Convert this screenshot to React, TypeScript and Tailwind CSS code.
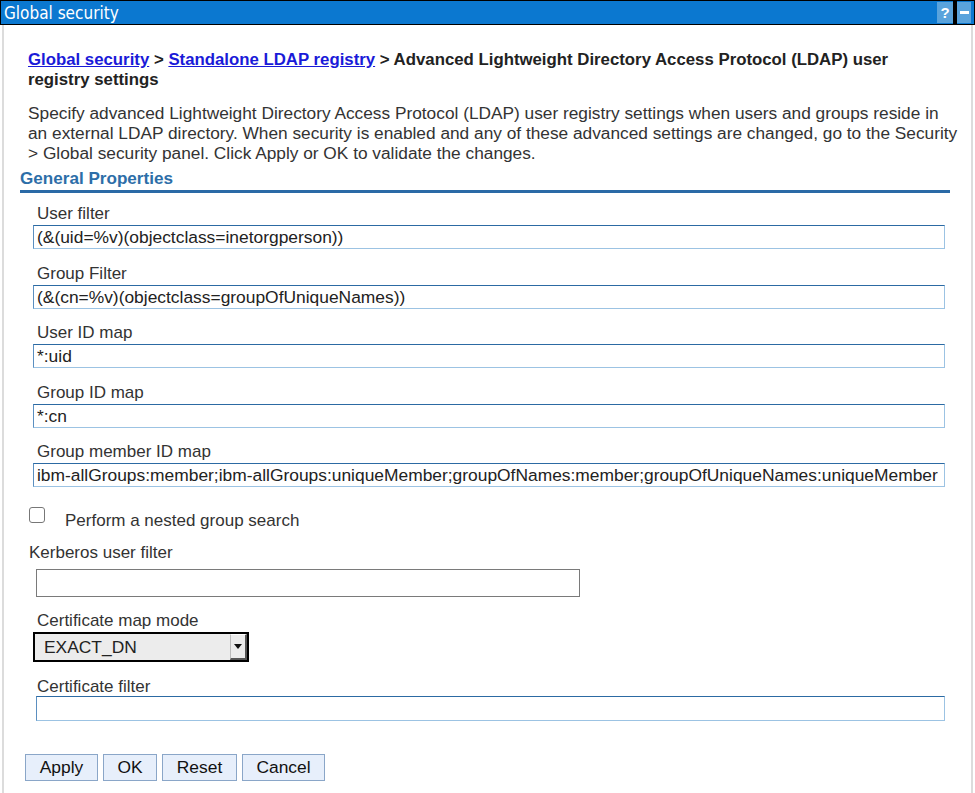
import React from 'react';

// Fields shown under "General Properties"
const fields = [
  { label: 'User filter', value: '(&(uid=%v)(objectclass=inetorgperson))' },
  { label: 'Group Filter', value: '(&(cn=%v)(objectclass=groupOfUniqueNames))' },
  { label: 'User ID map', value: '*:uid' },
  { label: 'Group ID map', value: '*:cn' },
  {
    label: 'Group member ID map',
    value: 'ibm-allGroups:member;ibm-allGroups:uniqueMember;groupOfNames:member;groupOfUniqueNames:uniqueMember',
  },
];

const buttons = [
  { label: 'Apply', w: 'w-[73px]' },
  { label: 'OK', w: 'w-[54px]' },
  { label: 'Reset', w: 'w-[75px]' },
  { label: 'Cancel', w: 'w-[83px]' },
];

const TextField: React.FC<{ value: string; className?: string }> = ({ value, className = '' }) => (
  <div
    className={`h-[24px] border border-[#9cc3e3] border-t-[#2c6aa3] border-l-[#5b8fc0] bg-white px-[3px] text-[17.4px] leading-[22px] text-[#222] whitespace-nowrap overflow-hidden ${className}`}
  >
    {value}
  </div>
);

export default function App() {
  return (
    <div className="w-[975px] h-[793px] bg-white overflow-hidden font-['Liberation_Sans',Arial,sans-serif] text-[17px] text-[#333]">
      {/* title bar */}
      <div className="h-[25px] bg-[#0b78d0] border border-black flex items-center justify-between">
        <span className="pl-[3px] text-white text-[17px] font-['Liberation_Sans_Narrow','DejaVu_Sans_Condensed',sans-serif] leading-[22px]">
          Global security
        </span>
        <div className="flex h-full items-stretch pr-[3px]">
          <div className="w-[16px] my-[1px] bg-[#5aa3dc] text-white font-bold text-[15px] leading-[21px] text-center">?</div>
          <div className="w-[4px] bg-black" />
          <div className="w-[14px] my-[1px] bg-[#5aa3dc] flex items-center justify-center">
            <div className="w-[9px] h-[3px] bg-white" />
          </div>
        </div>
      </div>

      <div className="mx-[2px] h-[768px] border-l-2 border-r-2 border-[#dcdcdc]">
        <div className="pt-[25px] pl-[24px]">
          <div className="w-[900px] font-bold text-[#222] text-[16.8px] leading-[20px]">
            <a className="text-[#1a1ad8] underline">Global security</a> &gt;{' '}
            <a className="text-[#1a1ad8] underline">Standalone LDAP registry</a> &gt; Advanced Lightweight Directory
            Access Protocol (LDAP) user registry settings
          </div>
          <p className="mt-[13px] text-[17.3px] leading-[20px] text-[#333] whitespace-nowrap">
            Specify advanced Lightweight Directory Access Protocol (LDAP) user registry settings when users and groups
            reside in
            <br />
            an external LDAP directory. When security is enabled and any of these advanced settings are changed, go to
            the Security
            <br />
            &gt; Global security panel. Click Apply or OK to validate the changes.
          </p>
        </div>

        <div className="ml-[16px] mr-[21px] mt-[6px] border-b-[3px] border-[#2a6aa6]">
          <div className="font-bold text-[17.1px] text-[#2d6ea8] leading-[20px] pb-[1px]">General Properties</div>
        </div>

        <div className="pl-[29px] pr-[26px] pt-[11px]">
          {fields.map((f) => (
            <div key={f.label} className="mb-[14.5px]">
              <div className="pl-[4px] leading-[20px]">{f.label}</div>
              <TextField value={f.value} className="mt-[1px]" />
            </div>
          ))}

          <div className="flex items-start mt-[21px]">
            <div className="w-[16px] h-[16px] mt-[-1px] border border-[#777] rounded-[3px] bg-white ml-[-4px]" />
            <span className="ml-[20px] leading-[20px] mt-[3px]">Perform a nested group search</span>
          </div>

          <div className="mt-[12px] leading-[20px] ml-[-4px]">Kerberos user filter</div>
          <div className="mt-[6px] ml-[3px] w-[544px] h-[28px] border border-[#7a7a7a] bg-white" />

          <div className="mt-[14px] pl-[4px] leading-[20px]">Certificate map mode</div>
          <div className="mt-[1px] w-[216px] h-[30px] border-2 border-black bg-[#ececec] flex items-center justify-between">
            <span className="pl-[9px] text-[17.4px] text-[#222]">EXACT_DN</span>
            <div className="h-full w-[17px] border-l border-l-[#bbb] border-t border-t-white border-r-2 border-r-[#555] border-b-2 border-b-[#555] bg-[#ececec] flex items-center justify-center">
              <svg width="8" height="5" viewBox="0 0 8 5">
                <path d="M0 0 H8 L4 5 Z" fill="#111" />
              </svg>
            </div>
          </div>

          <div className="mt-[15px] pl-[4px] leading-[19px]">Certificate filter</div>
          <TextField value="" className="ml-[3px] h-[25px]" />
        </div>

        <div className="flex gap-[5px] pl-[21px] mt-[33px]">
          {buttons.map((b) => (
            <button
              key={b.label}
              className={`h-[27px] ${b.w} border border-[#8aa6c8] bg-[#e7effb] text-[17.4px] text-[#111] leading-[25px] text-center`}
            >
              {b.label}
            </button>
          ))}
        </div>
      </div>
    </div>
  );
}
